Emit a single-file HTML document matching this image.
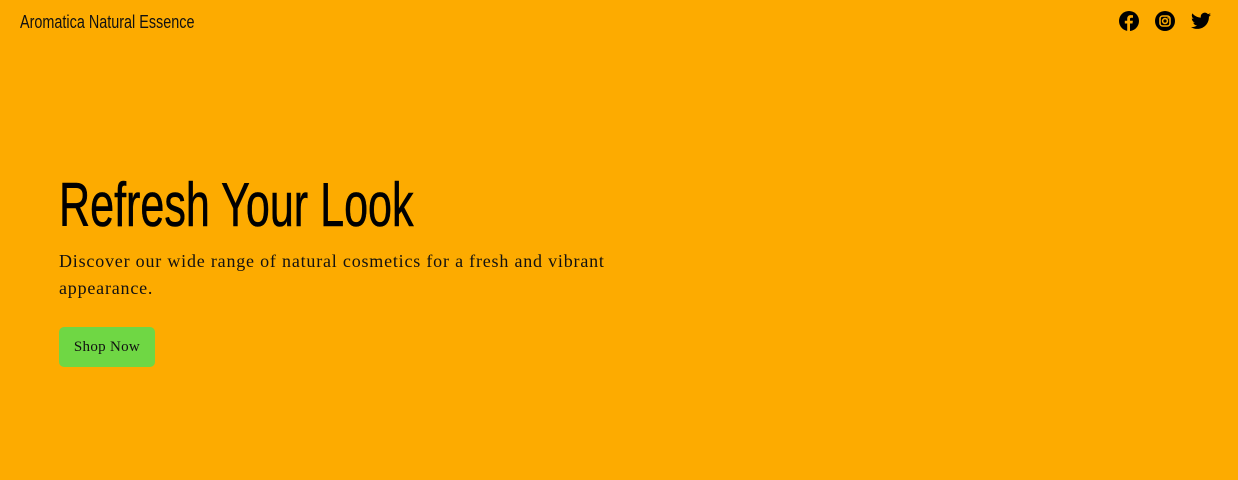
<!DOCTYPE html>
<html><head><style>
html,body{margin:0;padding:0;}
body{width:1238px;height:480px;background:#fdab00;position:relative;overflow:hidden;font-family:"Liberation Serif",serif;color:#111;}
.brand{position:absolute;left:20px;top:10px;font-family:"Liberation Sans",sans-serif;font-size:18px;white-space:nowrap;transform:scaleX(0.8);transform-origin:left top;line-height:24px;}
.icons{position:absolute;top:11px;left:1119px;}
.icons svg{position:absolute;top:0;}
h1{position:absolute;left:59px;top:168px;margin:0;font-family:"Liberation Sans",sans-serif;font-weight:normal;font-size:62px;line-height:76px;white-space:nowrap;transform:scaleX(0.695);transform-origin:left top;color:#000;-webkit-text-stroke:0.6px #000;}
p{position:absolute;left:59px;top:248px;margin:0;width:600px;font-size:18px;line-height:27px;letter-spacing:0.8px;}
.btn{position:absolute;left:59px;top:327px;width:96px;height:40px;background:#6fd744;border-radius:5px;font-size:15px;line-height:41px;text-align:center;letter-spacing:0.3px;}
</style></head><body>
<div class="brand">Aromatica Natural Essence</div>
<div class="icons">
<svg style="left:0" width="20" height="20" viewBox="0 0 20 20"><circle cx="10" cy="10" r="10" fill="#000"/><path d="M11 20V12.5h2.5l.4-2.8H11V8c0-.8.3-1.3 1.4-1.3H14V4.2c-.3 0-1.2-.1-2.2-.1-2.2 0-3.6 1.3-3.6 3.7v1.9H5.8v2.8h2.4V20z" fill="#fdab00"/></svg>
<svg style="left:36px" width="20" height="20" viewBox="0 0 20 20"><circle cx="10" cy="10" r="10" fill="#000"/><rect x="5" y="5" width="10" height="10" rx="2.8" fill="none" stroke="#fdab00" stroke-width="1.6"/><circle cx="10" cy="10" r="2.4" fill="none" stroke="#fdab00" stroke-width="1.6"/><circle cx="13.1" cy="6.9" r=".8" fill="#fdab00"/></svg>
<svg style="left:72px;top:1px" width="20" height="18" viewBox="0 0 24 20"><path d="M24 2.4c-.9.4-1.8.7-2.8.8 1-.6 1.8-1.6 2.2-2.7-1 .6-2 1-3.1 1.2C19.3.7 18 0 16.6 0c-2.7 0-4.9 2.2-4.9 4.9 0 .4 0 .8.1 1.1C7.7 5.8 4.1 3.900 1.7.9c-.4.7-.7 1.6-.7 2.5 0 1.7.9 3.2 2.2 4.1-.8 0-1.600-.2-2.2-.6v.1c0 2.4 1.7 4.4 3.9 4.8-.4.1-.8.2-1.3.2-.3 0-.6 0-.9-.1.6 2 2.4 3.4 4.6 3.4-1.7 1.3-3.8 2.1-6.1 2.1-.4 0-.8 0-1.2-.1 2.2 1.4 4.8 2.2 7.5 2.2 9.1 0 14-7.5 14-14v-.6c1-.7 1.8-1.6 2.5-2.5z" fill="#000"/></svg>
</div>
<h1>Refresh Your Look</h1>
<p>Discover our wide range of natural cosmetics for a fresh and vibrant appearance.</p>
<div class="btn">Shop Now</div>
</body></html>
